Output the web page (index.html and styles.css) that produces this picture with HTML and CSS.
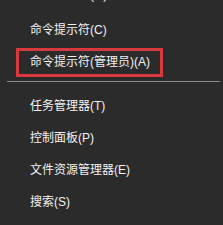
FILE: index.html
```html
<!DOCTYPE html>
<html>

<head>
	<title>Win+X menu</title>
	<meta charset="utf-8" />
	<link rel="stylesheet" href="styles.css">
</head>

<body>
	<ul class="menu">
		<li class="item item-cut">计算机管理(G)</li>
		<li class="item">命令提示符(C)</li>
		<li class="item item-marked"><span class="mark">命令提示符(管理员)(A)</span></li>
		<li class="separator"></li>
		<li class="item">任务管理器(T)</li>
		<li class="item">控制面板(P)</li>
		<li class="item">文件资源管理器(E)</li>
		<li class="item">搜索(S)</li>
	</ul>
</body>

</html>
```

FILE: styles.css
```css
/* general styles */
* {
	box-sizing: border-box;
}

html,
body {
	margin: 0;
	height: 100%;
	background-color: #2b2b2b;
	overflow: hidden;
}

body {
	font-family: "Liberation Sans", "Noto Sans CJK SC", sans-serif;
	font-size: 12px;
	color: #f2f2f2;
}

/* menu */
.menu {
	list-style: none;
	margin: -24px 0 0 0;
	padding: 0;
}

.item {
	display: flex;
	align-items: center;
	height: 32px;
	padding-left: 30px;
	white-space: nowrap;
}

.item-cut {
	height: 36px;
	padding-bottom: 2px;
}

.item-marked {
	padding-top: 5px;
}

.mark {
	margin-left: -14px;
	padding: 3px 10px 3px 11px;
	border: 3px solid #d8393f;
	line-height: 17px;
}

.separator {
	height: 12px;
	padding: 5px 3px 0 7px;
}

.separator::after {
	content: "";
	display: block;
	height: 1px;
	background-color: #8c8c8c;
}
```
